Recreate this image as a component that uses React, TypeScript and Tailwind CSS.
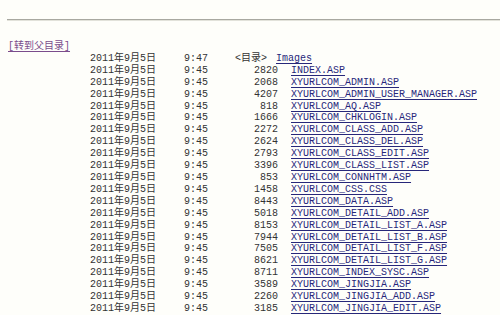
const files = [
  { size: '2820', name: 'INDEX.ASP' },
  { size: '2068', name: 'XYURLCOM_ADMIN.ASP' },
  { size: '4207', name: 'XYURLCOM_ADMIN_USER_MANAGER.ASP' },
  { size: '818', name: 'XYURLCOM_AQ.ASP' },
  { size: '1666', name: 'XYURLCOM_CHKLOGIN.ASP' },
  { size: '2272', name: 'XYURLCOM_CLASS_ADD.ASP' },
  { size: '2624', name: 'XYURLCOM_CLASS_DEL.ASP' },
  { size: '2793', name: 'XYURLCOM_CLASS_EDIT.ASP' },
  { size: '3396', name: 'XYURLCOM_CLASS_LIST.ASP' },
  { size: '853', name: 'XYURLCOM_CONNHTM.ASP' },
  { size: '1458', name: 'XYURLCOM_CSS.CSS' },
  { size: '8443', name: 'XYURLCOM_DATA.ASP' },
  { size: '5018', name: 'XYURLCOM_DETAIL_ADD.ASP' },
  { size: '8153', name: 'XYURLCOM_DETAIL_LIST_A.ASP' },
  { size: '7944', name: 'XYURLCOM_DETAIL_LIST_B.ASP' },
  { size: '7505', name: 'XYURLCOM_DETAIL_LIST_F.ASP' },
  { size: '8621', name: 'XYURLCOM_DETAIL_LIST_G.ASP' },
  { size: '8711', name: 'XYURLCOM_INDEX_SYSC.ASP' },
  { size: '3589', name: 'XYURLCOM_JINGJIA.ASP' },
  { size: '2260', name: 'XYURLCOM_JINGJIA_ADD.ASP' },
  { size: '3185', name: 'XYURLCOM_JINGJIA_EDIT.ASP' },
];

const mono = { fontFamily: '"Liberation Mono", "Noto Sans CJK SC", monospace' };

export default function App() {
  return (
    <div
      className="w-[500px] h-[315px] overflow-hidden bg-[#fefefa] text-[10px] leading-[11.9px] text-[#333]"
      style={mono}
    >
      {/* top rule */}
      <div className="pt-[19px] pl-[7px]">
        <div className="h-px bg-[#a8a8a0]" />
        <div className="h-px bg-[#e2e2da]" />
      </div>

      <div className="pl-[8px] pt-[20px]">
        <a href="#" className="underline underline-offset-[2px] text-[#7a4c8c]">
          [转到父目录]
        </a>
      </div>

      <div className="pl-[90px]">
        <div className="flex whitespace-pre">
          <span className="w-[94px]">2011年9月5日</span>
          <span className="w-[51px]">9:47</span>
          <span className="w-[41px]">&lt;目录&gt;</span>
          <a href="#" className="underline underline-offset-[2px] text-[#27277a]">Images</a>
        </div>
        {files.map((f) => (
          <div key={f.name} className="flex whitespace-pre">
            <span className="w-[94px]">2011年9月5日</span>
            <span className="w-[51px]">9:45</span>
            <span className="w-[43px] text-right">{f.size}</span>
            <a href="#" className="ml-[13px] underline underline-offset-[2px] text-[#27277a]">
              {f.name}
            </a>
          </div>
        ))}
      </div>
    </div>
  );
}
